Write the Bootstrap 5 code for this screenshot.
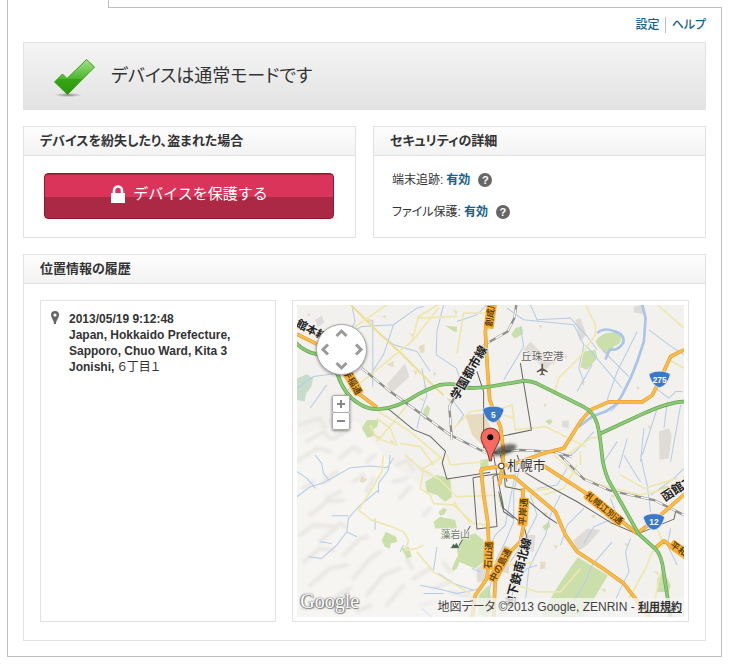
<!DOCTYPE html>
<html lang="ja">
<head>
<meta charset="utf-8">
<meta name="viewport" content="width=device-width, initial-scale=1">
<title>デバイスの状態</title>
<link href="https://cdn.jsdelivr.net/npm/bootstrap@5.3.0/dist/css/bootstrap.min.css" rel="stylesheet">
<style>
  body { font-family: "Liberation Sans", "Noto Sans CJK JP", sans-serif; font-size: 12px; line-height: 16px; color: #333; font-feature-settings: "palt"; background: #fff; }
  a { color: #14628f; text-decoration: none; font-weight: 700; }
  .shell { padding: 0 7px 10px; }
  .tab-gap { width: 102px; height: 8px; border: solid #bfbfbf; border-width: 0 1px; }
  .tab-line { border-bottom: 1px solid #bfbfbf; }
  .sheet { border: solid #bfbfbf; border-width: 0 1px 1px; padding: 0 15px 15px; }
  .top-links { height: 34px; }
  .top-links a { font-size: 12px; font-weight: 500; }
  .top-links a + a { border-left: 1px solid #bfbfbf; padding-left: 6px; margin-left: 5px; }
  .status { height: 68px; border: 1px solid #e2e2e2; background: linear-gradient(#f4f4f4, #e3e3e3); padding-left: 28px; gap: 15px; }
  .status h1 { font-size: 18px; line-height: 24px; font-weight: 400; }
  .cols { display: grid; grid-template-columns: 1fr 1fr; gap: 17px; margin: 16px 0; }
  .panel { border: 1px solid #e2e2e2; }
  .panel h2 { font-size: 13px; line-height: 28px; font-weight: 700; padding: 0 16px; margin: 0; border-bottom: 1px solid #e2e2e2; background: linear-gradient(#fdfdfd, #f3f3f3); }
  .protect { padding: 17px 21px 18px 20px; }
  .btn-protect { height: 46px; font-size: 15px; line-height: 20px; color: #fff; border: 1px solid #8e1a30; border-radius: 4px; background: linear-gradient(#db345b 0 52%, #ab2944 52%); padding: 0 0 4px; gap: 7px; box-shadow: inset 0 1px #b32142; }
  .btn-protect:hover { color: #fff; }
  .detail { padding: 16px 18px; gap: 16px; }
  .detail a { margin: 0 3px 0 3px; }
  .help { width: 14px; height: 14px; border-radius: 50%; background: #666; color: #fff; font-size: 11px; line-height: 14px; font-weight: 700; padding: 0; border: 0; margin-left: 5px; }
  .history { display: grid; grid-template-columns: 236fr 396fr; gap: 16px; padding: 16px 16px 18px; }
  .box { border: 1px solid #e2e2e2; }
  .entry { padding: 10px 9px; gap: 9px; font-weight: 700; }
  .entry svg { flex: none; }
  .map-box { padding: 4px; }
  .map { position: relative; overflow: hidden; height: 312px; }
  .map > svg { display: block; width: 100%; height: 312px; }
  .pan { position: absolute; left: 19px; top: 19px; width: 51px; height: 51px; border-radius: 50%; background: #fff; border: 1px solid #aaa; box-shadow: 0 1px 3px #0006; display: grid; grid-template-columns: repeat(3, 1fr); grid-template-rows: repeat(3, 1fr); place-items: center; }
  .pan button { border: 0; background: none; padding: 0; width: 15px; height: 15px; display: flex; }
  .pan .n { grid-area: 1 / 2; } .pan .w { grid-area: 2 / 1; } .pan .e { grid-area: 2 / 3; } .pan .s { grid-area: 3 / 2; }
  .zoomer { position: absolute; left: 35px; top: 90px; width: 18px; border-radius: 2px; box-shadow: 0 1px 3px #0007; }
  .zoomer button { display: flex; align-items: center; justify-content: center; width: 18px; height: 18px; border: 1px solid #aaa; border-radius: 2px; background: #fff; padding: 0; }
  .zoomer button + button { margin-top: -1px; }
  .logo { position: absolute; left: 3px; bottom: 3px; font: 20px/26px "Liberation Serif", serif; color: #fff; text-shadow: 0 0 2px #555, 1px 1px 1px #888, -1px 0 1px #999; }
  .credit { position: absolute; right: 0; bottom: 0; height: 19px; padding: 0 2px 0 44px; line-height: 18px; color: #444; white-space: nowrap; background: linear-gradient(90deg, #f5f5f500, #f5f5f5c8 50px); }
  .credit a { color: #333; font-size: 11px; text-decoration: underline; }
  .jp { font-family: "Noto Sans CJK JP", sans-serif; font-feature-settings: normal; }
</style>
<script src="https://cdn.jsdelivr.net/npm/bootstrap@5.3.0/dist/js/bootstrap.bundle.min.js"></script>
</head>
<body>
<div class="shell">
  <div class="d-flex"><div class="tab-gap"></div><div class="tab-line flex-grow-1"></div></div>
  <main class="sheet">
    <nav class="top-links d-flex justify-content-end align-items-center"><a href="#settings">設定</a><a href="#help">ヘルプ</a></nav>

    <section class="status d-flex align-items-center">
      <svg width="44" height="42" viewBox="0 0 44 42" aria-hidden="true">
        <defs><linearGradient id="ck" x1="0" y1="0" x2="0" y2="1"><stop offset="0" stop-color="#a5e08a"/><stop offset=".55" stop-color="#4db52e"/><stop offset=".56" stop-color="#36a514"/><stop offset="1" stop-color="#2a9608"/></linearGradient>
        <radialGradient id="cs"><stop offset="0" stop-color="#888"/><stop offset="1" stop-color="#888" stop-opacity="0"/></radialGradient></defs>
        <ellipse cx="16" cy="40" rx="14" ry="2" fill="url(#cs)"/>
        <path d="M2.500 27 10.500 19 15 23.500 34.500 4.500 42.500 12 15.500 39.500Z" fill="url(#ck)" stroke="#3ca11c"/>
      </svg>
      <h1 class="mb-0">デバイスは通常モードです</h1>
    </section>

    <div class="cols">
      <section class="panel">
        <h2>デバイスを紛失したり、盗まれた場合</h2>
        <div class="protect">
          <button type="button" class="btn btn-protect w-100 d-flex align-items-center justify-content-center">
            <svg width="16" height="20" viewBox="0 0 16 20" aria-hidden="true"><path d="M4 9V6.500a4 4 0 0 1 8 0V9" fill="none" stroke="#fff" stroke-width="2.600"/><path d="M1 9h14v10H1z" fill="#fff"/></svg>デバイスを保護する</button>
        </div>
      </section>
      <section class="panel">
        <h2>セキュリティの詳細</h2>
        <div class="detail d-flex flex-column">
          <div>端末追跡:<a href="#tracking">有効</a><button type="button" class="help" aria-label="端末追跡のヘルプ">?</button></div>
          <div>ファイル保護:<a href="#files">有効</a><button type="button" class="help" aria-label="ファイル保護のヘルプ">?</button></div>
        </div>
      </section>
    </div>

    <section class="panel">
      <h2>位置情報の履歴</h2>
      <div class="history">
        <div class="box">
          <div class="entry d-flex">
            <svg width="10" height="14" viewBox="0 0 10 14" aria-hidden="true"><path fill="#666" fill-rule="evenodd" d="M5 0a4 4 0 0 1 4 4c0 3-3 5-3 9H4C4 9 1 7 1 4a4 4 0 0 1 4-4Zm0 2.500a1.600 1.600 0 1 0 0 3.200 1.600 1.600 0 0 0 0-3.200Z"/></svg>
            <div>2013/05/19 9:12:48<br>Japan, Hokkaido Prefecture, Sapporo, Chuo Ward, Kita 3 Jonishi, <span class="fw-normal">６丁目１</span></div>
          </div>
        </div>
        <div class="box map-box">
          <div class="map">
            <svg viewBox="21 30 1158 936" preserveAspectRatio="xMidYMid slice" role="img" aria-label="札幌市の地図">
              <defs>
                <filter id="soft" x="-50%" y="-50%" width="200%" height="200%"><feGaussianBlur stdDeviation="5"/></filter>
                <path id="shield" d="M-32-13Q-24-24 0-24T32-13C26 4 20 20 0 25-20 20-26 4-32-13Z" fill="#3a78c9" stroke="#e9eef5" stroke-width="2"/>
              </defs>
              <path fill="#f3f1ed" d="M0 0h1200v1000H0z"/>
              <!-- hills -->
              <path fill="#f6f5f1" d="M21 420 200 380 300 500 450 620 560 860 520 966H21z"/>
              <g fill="none" stroke="#e9e7e3" stroke-width="12" stroke-linecap="round" stroke-linejoin="round" filter="url(#soft)">
                <path d="M30 390l60-20 15 30M120 380l30-20M50 440l50-30 20 20M130 430l30-15M20 500l60-40 40 10M150 490l40-35 20 15M230 500l25-20M40 580l30-20M100 560l40-30M190 560l30-20M60 660l50-40 50-5M30 720l40-30 70 5M90 740l60-55 15 10M230 590l20-40M320 510l30-15 20 30M310 560l40-10M330 610l30-35M390 520l30 20M40 800l50-40 40 5M160 780l50-50 20-5M60 870l60-50 50-10M190 850l50-60 30-20M230 900l50-60 50-20M130 910l50-30M40 940l60-10M200 950l40-20M290 930l50-60M280 740l30-15M370 850l50-30M350 790l15 30M430 880l50-20M400 660l20-20M460 800l20 30M390 930l60-15M110 610l40-20M480 890l60 15"/>
              </g>
              <!-- built-up blocks -->
              <g fill="#dfdbd6"><path d="M290 268l55-62 12 40-52 48zM75 75l20-12 8 20-20 14zM700 165l20-25 65 65-20 20zM855 75l15-5 18 50-20 20zM1030 35l28-5v28l-28-5zM815 378l20-2v25l-20-5zM1105 410l30-10 8 20-8 70-28 5zM850 735l40-35 40 5-40 45-30 20zM710 720l25 0-5 50-25-5zM560 820l25-20v60h-25zM640 750l20 5-5 80-25-5z"/></g>
              <g fill="#e7dcc0"><path d="M525 360l60-5 25 75-25 30-40-40zM385 155l18-8v25l-12 4zM50 60l10-5v12zM275 65l12-5v10zM490 45l12 5-5 10zM780 200l12 0v10zM750 800l15 0v20l-17 3zM215 545l17 8-12 10-12-3zM232 70l16 7v8l-16-5zM290 210l20-12v20zM355 115l15 4v10zM370 225l12 6-6 10zM400 270l12 8-7 10zM430 230l9 6-8 9zM470 310l15 4-6 10zM385 310l15 0v10zM255 420l14 5-6 8zM300 435l12 5-6 9zM820 180l12 3-5 10zM870 260l12 0-3 13zM745 90l10 2-3 12zM760 325l10 4-8 8zM1035 275l12 2-3 10zM1070 390l14 4-7 10zM900 660l14 0-3 12zM960 600l13 0-5 12zM930 880l15 0 0 14zM1000 745l13 0-4 10zM1090 830l12 0v10zM1140 600l10 0 0 10zM1030 940l12 0v10zM760 650l13 5-8 10zM790 750l12 0-6 12zM860 800l14 4-7 9z"/></g>
              <!-- parks -->
              <g fill="#cbdfab">
                <path d="M915 140q20-35 70-25 18 30-15 40-8 22-25 20l-22-20zM880 170l35-5 5 25-30 35-20-8 5-25zM663 120l12-20 20-5 3 22-25 15zM215 400l15-25 35 0-3 20-15 10 10 15-25 8zM410 590l-5-30 35-20 40 10 5 55-20 15-25-20zM430 680l20-15 45 10 5 25-45 0-20 0zM500 760l20-35 35-10 25 20 5 60-30 25-50-20zM485 820l15-35 10 10-10 25-12 8zM275 735l12-25 30 15 5 15-20 5-3 15-15-5zM335 760l20-5 10 30-15 5zM445 650l15-12 10 5-8 15-12 5zM752 966q30-70 110-180l90 55-75 125zM1100 850l20-20 20 40-5 20-35 0zM570 495l24-3v23l-24 2zM465 93l35 3 0 15-8 0zM400 345l12-15 8 10-5 20-12 15-4-5zM755 695l20-15 5 15-15 12zM1105 580l25-8 10 5-20 10zM565 900l30-30 15 70-20 26-25-10zM623 600l12 5 5 20-8 15zM765 378l14-6 8 8-10 10z"/>
              </g>
              <path fill="#c8dccc" d="M21 250l30-12 18 12-5 25-15 20-5 25-23-5z"/>
              <!-- rivers -->
              <g fill="none" stroke="#b4cbe8" stroke-width="3" stroke-linejoin="round">
                <path stroke="#a9c5e8" stroke-width="8" d="M1055 30l10 40-5 70-20 60-20 50-25 50-20 30-30 20-40 15-40 30"/>
                <path stroke="#a9c5e8" stroke-width="8" d="M920 115q20-18 50-6 35 10 28 35-15 25-40 20-10 20-13 30"/>
                <path d="M1075 105l60 45 45 30M935 165l80 80M885 150l110 130M1040 110l-60 120-30 85M905 210l-45 80M720 30l20 45 100-5 50 55 30 40M650 40l50 35 150 15 30 60-15 70 15 40M690 95l10 60-60 100"/>
                <path d="M170 120l45-25 95-5 70-50 20-5M185 30l10 50-20 40M248 75l0 200M310 90l-30 90-40 60M460 30l-20 80-2 70 60 40 20 60M395 220l15 80-20 60-10 40M21 280l50-35 60-8M190 265l-40 50M110 270l-50 70M250 100l60 50 70 20 40 60M500 80l60-20 30-30M490 320l30 40-20 30"/>
                <path d="M21 605l40-30 40-12 80-45 60-5 50 5 20-30M75 480l20 25 5 30 20 25M21 530l30 20 25 30M300 480l-5 45-30 40 0 30M265 585l-60 50-30 35-5 40 30 15M125 662l50 0M170 710l-30 40-45 40-40-5M90 740l35 5M255 670l0 35M440 755l-10 70M445 835l45 30 60 20 30-10M390 870l50 10 60 15 50-10M400 895l60 0M395 940l30 25M330 770l10-20M545 820l25 10"/>
                <path d="M680 510l-20 100-15 80-30 30-20 40M690 510l-20 80 0 90-25 60-30 60-25 120M720 600l20 60-40 80-40 60M810 600l-30 60-15 60-50 100-10 100M880 640l-50 50-20 60M960 610l20 55-70 30-30 50M965 740l-60 70-20 50-60 100M1020 730l-15 40 10 60-30 60-30 75M1050 480l10 50 10 40 10 80M1000 480l30 50 20 30M830 520l-30 50-60 10M1180 520l-30 30-70 50M1140 700l-10 50 30 60M740 810l-30 10-40 50-10 70M910 410l-55 60-30 20M980 440l-40 60M1010 430l-25 90M1060 400l-10 100M1100 340l-45 140M1130 320l-10 80M1170 330l-30 170M1095 280l40 30 20-20 20 0M960 350l30-30"/>
              </g>
              <!-- minor roads -->
              <g fill="none" stroke="#eee7ae" stroke-width="5" stroke-linejoin="round">
                <path stroke="#ebe08f" stroke-width="6" d="M182 30l88 88 70 65 90 90 30 28"/>
                <path d="M445 30l-60 35-20 75M500 175l20-120 80 0M380 70l120-5M130 330l240-195 75-95M130 140l160-110M250 340l110 70 100 85M350 330l-30 40-60 70M260 370l40 30 20 50-60-20-20-40M330 445l60 10 40 55M490 400l50-50 70-10M470 480l10 30 100-10"/>
                <path d="M885 30l30 60 0 30-50 70-60 60-15 50M1100 30l80 70M1135 195l45 25M600 350l65-20 10 75 90-10 60 30 60 30M830 480l70-50 30-5M640 360l30 10"/>
                <path d="M280 480l-5 50-35 60-35 55 40 30 60 20 35 15 15 25-10 30 35-5 20-10M380 770l50 60 50 30 60 35M345 480l45 40 60 35 50 50 120-5M450 490l-50 30-10 60 30 20 10 25 60 5 60 55 40 5M490 620l50 65M600 800l80 10 50-10"/>
                <path d="M640 570l60 20 80-10M790 480l70 60 70 30 120 30 80-20 50-10M860 510l-40 70-60 20M1100 700l20 50-35 20-20 50-50 90M1110 830l-10 50-10 50-15 36M680 870l60 20 70 0 60-70M990 540l70 40 100-30M870 470l0 40"/>
              </g>
              <!-- dark railway and metro lines -->
              <g fill="none" stroke="#666" stroke-width="3" stroke-linejoin="round">
                <path d="M290 338l80 66 50 20 46 45-10 35 14 48 130-20M690 205l33 200-95 20M548 548l12 154 60-8-12-150 25-10M548 548l70-12M560 230l20 60 0 170M610 480l10 60 20 100 60 50 10 40M630 480l20 80M640 520l5 55 50 10M680 480l20 50 50 30 110 60 100 62 80 35 110-45 5-22M710 615l60 50 30 20M540 693l-35 60M625 590l15 60 30 20"/>
              </g>
              <g fill="none" stroke-linejoin="round">
                <path stroke="#8f8f8f" stroke-width="7" d="M215 220l85 70 180 130 110 55 100-10 100 6 55 15M790 462l90 90 80 35 130 28 90 45M485 435l-8-100 35-60 30-60 40-65 70-40 20-40 6-40"/>
                <path stroke="#fff" stroke-width="4" stroke-dasharray="24 20" d="M215 220l85 70 180 130 110 55 100-10 100 6 55 15M790 462l90 90 80 35 130 28 90 45M485 435l-8-100 35-60 30-60 40-65 70-40 20-40 6-40"/>
              </g>
              <!-- arterial roads: casing, then fill -->
              <g fill="none" stroke-linejoin="round">
                <path stroke="#d99a2c" stroke-width="11" d="M21 118l70 35 70 75 40 65 60 45M597 30l-12 80 5 90 8 115 32 80 10 75-5 50-8 50M570 523l100-16 90-32 60-15 50-80 30-35 55-24h100l30-20 25-51 30-65 40-20M627 545h43l125 105 30 70 35 50 70 45 70 50 80 105M740 500l140 90 160 125 70-55 80-70M1095 757l25-20 60 45M572 523l8 77 12 80 5 100-7 70-35 50-10 70M697 580l3 110-10 50-40 40-35 60-5 130"/>
                <path stroke="#fbbb47" stroke-width="8" d="M21 118l70 35 70 75 40 65 60 45M597 30l-12 80 5 90 8 115 32 80 10 75-5 50-8 50M570 523l100-16 90-32 60-15 50-80 30-35 55-24h100l30-20 25-51 30-65 40-20M627 545h43l125 105 30 70 35 50 70 45 70 50 80 105M740 500l140 90 160 125 70-55 80-70M1095 757l25-20 60 45M572 523l8 77 12 80 5 100-7 70-35 50-10 70M697 580l3 110-10 50-40 40-35 60-5 130"/>
                <path stroke="#64a34f" stroke-width="11" d="M15 142q30 30 65 36 35 10 63 62 20 60 62 85 25 18 60 18 60-5 115-43 45-22 70-30 25-4 40-2 40 18 110 7l100-17q20-1 40 8l140 70q28 14 40 50 8 30 14 90 3 40 20 80l90 160 50 45q20 20 25 70l22 140M925 418l125-58q80-38 130-40"/>
                <path stroke="#8bcb76" stroke-width="7" d="M15 142q30 30 65 36 35 10 63 62 20 60 62 85 25 18 60 18 60-5 115-43 45-22 70-30 25-4 40-2 40 18 110 7l100-17q20-1 40 8l140 70q28 14 40 50 8 30 14 90 3 40 20 80l90 160 50 45q20 20 25 70l22 140M925 418l125-58q80-38 130-40"/>
              </g>
              <!-- airport and mountain symbols -->
              <path fill="#5e554e" d="M753 208q3-4 5 0v12l14 9v4l-14-5v8l5 4v2l-7-2-8 2v-2l5-4v-8l-14 5v-4l14-9z"/>
              <path fill="#4c6a50" stroke="#f3f1ed" stroke-width="2" d="M480 760l9-15 5 4 4-8 12 19z"/>
              <!-- place names -->
              <g class="jp" text-anchor="middle" stroke-linejoin="round" paint-order="stroke">
                <g fill="#222" stroke="#f5f3ef" stroke-width="4" font-weight="700" font-size="33">
                  <text transform="translate(60 116) rotate(27)">館本線</text>
                  <text transform="translate(547 240) rotate(-60)" font-size="36">学園都市線</text>
                  <text transform="translate(695 836) rotate(-75)" font-size="36">地下鉄南北線</text>
                  <text transform="translate(1168 590) rotate(-34)" font-size="36">函館本</text>
                </g>
                <g fill="#fbb034">
                  <rect x="-42" y="-16" width="84" height="30" rx="5" transform="translate(187 262) rotate(60)"/>
                  <rect x="-60" y="-15" width="120" height="30" rx="5" transform="translate(603 42) rotate(-82)"/>
                  <rect x="-43" y="-15" width="86" height="30" rx="5" transform="translate(595 780) rotate(-87)"/>
                  <rect x="-56" y="-15" width="112" height="30" rx="5" transform="translate(630 810) rotate(-62)"/>
                  <rect x="-43" y="-15" width="86" height="30" rx="5" transform="translate(699 650) rotate(-86)"/>
                  <rect x="-70" y="-15" width="140" height="30" rx="5" transform="translate(941 640) rotate(39)"/>
                  <rect x="-43" y="-15" width="86" height="30" rx="5" transform="translate(1175 770) rotate(36)"/>
                </g>
                <g fill="#4a3206" font-size="27" font-weight="500">
                  <text transform="translate(187 262) rotate(60)" y="9">手稲通</text>
                  <text transform="translate(603 42) rotate(-82)" y="9">創成川通</text>
                  <text transform="translate(595 780) rotate(-87)" y="9">石山通</text>
                  <text transform="translate(630 810) rotate(-62)" y="9">中の島通</text>
                  <text transform="translate(699 650) rotate(-86)" y="9">平岸通</text>
                  <text transform="translate(941 640) rotate(39)" y="9">札幌江別通</text>
                  <text transform="translate(1175 770) rotate(36)" y="9">平和通</text>
                </g>
                <g stroke="#f5f3ef" stroke-width="5">
                  <text x="756" y="196" font-size="32" fill="#666">丘珠空港</text>
                  <text x="708" y="526" font-size="38" fill="#333">札幌市</text>
                  <text x="495" y="730" font-size="29" fill="#71826d">藻岩山</text>
                </g>
              </g>
              <g font-family="Liberation Sans, sans-serif" font-weight="700" font-size="25" fill="#fff" text-anchor="middle">
                <use href="#shield" x="1107" y="253"/><text x="1107" y="263">275</text>
                <use href="#shield" x="1090" y="680"/><text x="1090" y="690">12</text>
                <use href="#shield" x="609" y="358"/><text x="609" y="368">5</text>
              </g>
              <ellipse cx="642" cy="465" rx="38" ry="14" fill="#222" opacity=".65" filter="url(#soft)" transform="rotate(-18 642 465)"/>
              <circle cx="633" cy="513" r="8" fill="#fff" stroke="#444" stroke-width="3"/>
              <path d="M600 399a28 28 0 0 1 28 28c0 25-22 32-25 70h-6c-3-38-25-45-25-70a28 28 0 0 1 28-28Z" fill="#f76a61" stroke="#8b3630" stroke-width="3"/>
              <circle cx="600" cy="427" r="9"/>
            </svg>
            <div class="pan">
              <button type="button" class="n" aria-label="上へ移動"><svg width="15" height="15" viewBox="0 0 15 15"><path d="M2.500 10l5-5 5 5" fill="none" stroke="#999" stroke-width="3"/></svg></button>
              <button type="button" class="w" aria-label="左へ移動"><svg width="15" height="15" viewBox="0 0 15 15"><path d="M10 2.500l-5 5 5 5" fill="none" stroke="#999" stroke-width="3"/></svg></button>
              <button type="button" class="e" aria-label="右へ移動"><svg width="15" height="15" viewBox="0 0 15 15"><path d="M5 2.500l5 5-5 5" fill="none" stroke="#999" stroke-width="3"/></svg></button>
              <button type="button" class="s" aria-label="下へ移動"><svg width="15" height="15" viewBox="0 0 15 15"><path d="M2.500 5l5 5 5-5" fill="none" stroke="#999" stroke-width="3"/></svg></button>
            </div>
            <div class="zoomer">
              <button type="button" aria-label="拡大"><svg width="8" height="8" viewBox="0 0 8 8"><path d="M3 0h2v3h3v2H5v3H3V5H0V3h3z" fill="#888"/></svg></button>
              <button type="button" aria-label="縮小"><svg width="8" height="8" viewBox="0 0 8 8"><path d="M0 3h8v2H0z" fill="#888"/></svg></button>
            </div>
            <div class="logo">Google</div>
            <div class="credit">地図データ ©2013 Google, ZENRIN - <a href="#terms">利用規約</a></div>
          </div>
        </div>
      </div>
    </section>
  </main>
</div>
</body>
</html>
